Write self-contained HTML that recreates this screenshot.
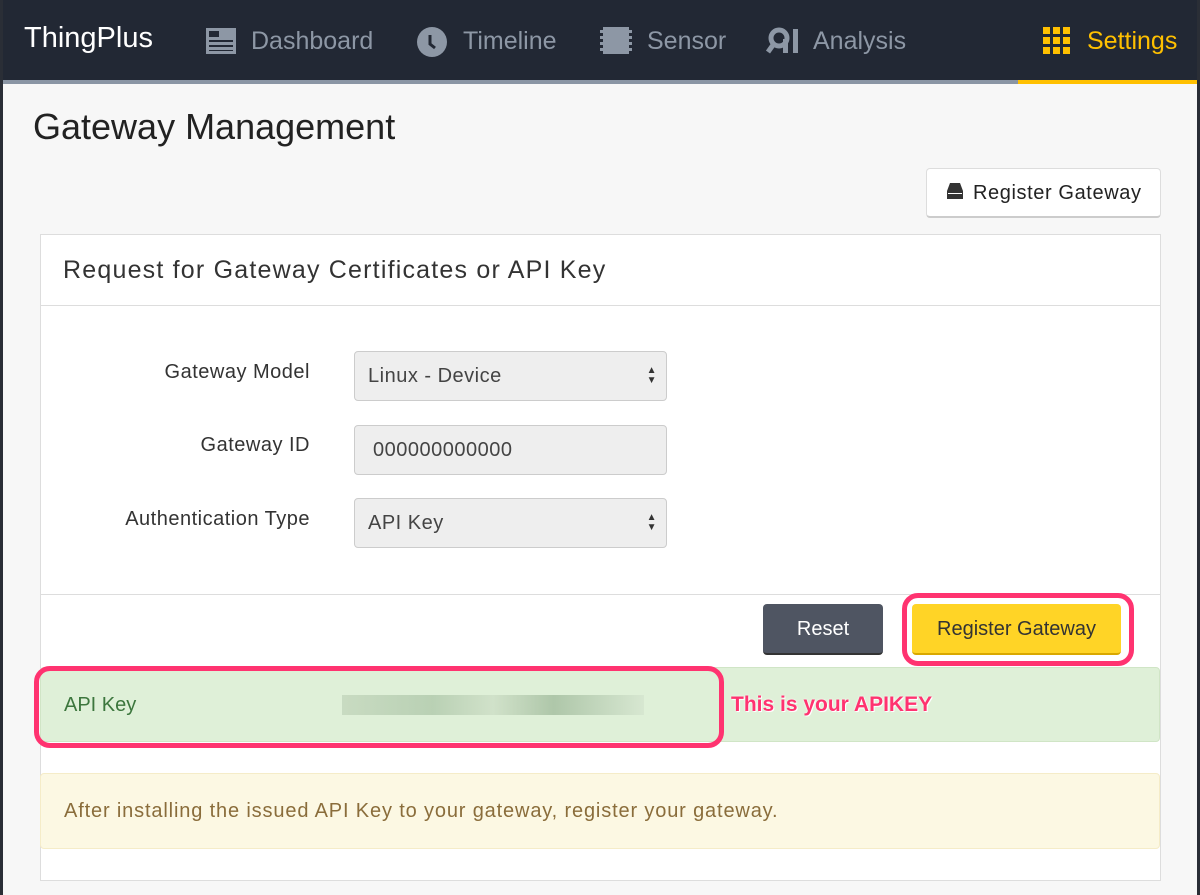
<!DOCTYPE html>
<html><head><meta charset="utf-8"><style>
*{box-sizing:border-box;margin:0;padding:0}
body{width:1200px;height:895px;background:#f7f7f7;font-family:"Liberation Sans","DejaVu Sans",sans-serif;position:relative;overflow:hidden}
.nav{position:absolute;left:0;top:0;width:1200px;height:84px;background:#222834;border-bottom:4px solid #8a95a4}
.nav .a{position:absolute;top:27px;font-size:25px;color:#8d97a5}
.sel{position:absolute;left:1018px;top:80px;width:179px;height:4px;background:#ffc000}
.abs{position:absolute}
.panel{position:absolute;left:40px;top:234px;width:1121px;height:647px;background:#fff;border:1px solid #ddd}
.lab{position:absolute;font-size:20px;letter-spacing:.5px;color:#333;text-align:right;width:270px;left:40px}
.inp{position:absolute;left:354px;width:313px;height:50px;background:#eee;border:1px solid #ccc;border-radius:4px;font-size:20px;letter-spacing:.5px;color:#444;padding:13px 0 0 13px}
.arr{position:absolute;right:9px;top:14px;font-size:10px;line-height:10px;color:#333}
</style></head><body>
<div class="nav">
<div class="a" style="left:24px;top:22px;color:#fff;font-size:29px">ThingPlus</div>
<svg class="abs" style="left:206px;top:28px" width="30" height="26"><rect x="0" y="0" width="30" height="26" fill="#8d97a5"/><rect x="3" y="3" width="10" height="6" fill="#222834"/><rect x="3" y="12" width="24" height="2" fill="#222834"/><rect x="3" y="17" width="24" height="2" fill="#222834"/><rect x="3" y="22" width="24" height="1" fill="#222834"/></svg>
<div class="a" style="left:251px">Dashboard</div>
<svg class="abs" style="left:417px;top:27px" width="30" height="30"><circle cx="15" cy="15" r="15" fill="#8d97a5"/><path d="M13 8v9l5 4" stroke="#222834" stroke-width="3" fill="none"/></svg>
<div class="a" style="left:463px">Timeline</div>
<svg class="abs" style="left:600px;top:27px" width="32" height="27"><rect x="3" y="0" width="26" height="27" fill="#8d97a5"/><g fill="#8d97a5"><rect x="0" y="3" width="32" height="3"/><rect x="0" y="9" width="32" height="3"/><rect x="0" y="15" width="32" height="3"/><rect x="0" y="21" width="32" height="3"/></g></svg>
<div class="a" style="left:647px">Sensor</div>
<svg class="abs" style="left:766px;top:27px" width="34" height="27"><circle cx="13" cy="11" r="8" stroke="#8d97a5" stroke-width="5" fill="none"/><path d="M7 18l-5 7" stroke="#8d97a5" stroke-width="5"/><rect x="17" y="12" width="5" height="14" fill="#8d97a5"/><rect x="27" y="2" width="5" height="24" fill="#8d97a5"/></svg>
<div class="a" style="left:813px">Analysis</div>
<svg class="abs" style="left:1043px;top:27px" width="28" height="27" fill="#ffc000"><rect x="0" y="0" width="7" height="7"/><rect x="10" y="0" width="7" height="7"/><rect x="20" y="0" width="7" height="7"/><rect x="0" y="10" width="7" height="7"/><rect x="10" y="10" width="7" height="7"/><rect x="20" y="10" width="7" height="7"/><rect x="0" y="20" width="7" height="7"/><rect x="10" y="20" width="7" height="7"/><rect x="20" y="20" width="7" height="7"/></svg>
<div class="a" style="left:1087px;color:#ffc000">Settings</div>
</div>
<div class="sel"></div>
<div class="abs" style="left:0;top:0;width:3px;height:895px;background:#2a2e36"></div>
<div class="abs" style="left:1197px;top:0;width:3px;height:895px;background:#2a2e36"></div>
<div class="abs" style="left:33px;top:106px;font-size:36px;color:#222">Gateway Management</div>
<div class="abs" style="left:926px;top:168px;width:235px;height:50px;background:#fff;border:1px solid #ddd;border-bottom:2px solid #ccc;border-radius:4px;font-size:20px;letter-spacing:.6px;color:#222;padding:13px 0 0 46px">Register Gateway</div>
<svg class="abs" style="left:947px;top:183px" width="16" height="16"><path d="M3 0h10l3 8v8H0V8z" fill="#333"/><rect x="1" y="10" width="14" height="1" fill="#fff"/></svg>
<div class="panel">
<div class="abs" style="left:0;top:0;width:1119px;height:71px;border-bottom:1px solid #ddd;font-size:25px;letter-spacing:1.2px;color:#333;padding:21px 0 0 22px">Request for Gateway Certificates or API Key</div>
<div class="abs" style="left:0;top:359px;width:1119px;height:1px;background:#ddd"></div>
</div>
<div class="lab" style="top:361px">Gateway Model</div>
<div class="inp" style="top:351px">Linux - Device<div class="arr">▲<br>▼</div></div>
<div class="lab" style="top:434px">Gateway ID</div>
<div class="inp" style="top:425px;padding-left:18px">000000000000</div>
<div class="lab" style="top:508px">Authentication Type</div>
<div class="inp" style="top:498px">API Key<div class="arr">▲<br>▼</div></div>
<div class="abs" style="left:763px;top:604px;width:120px;height:51px;background:#4f5562;border-radius:4px;border-bottom:2px solid #333;color:#fff;font-size:20px;text-align:center;padding-top:14px">Reset</div>
<div class="abs" style="left:912px;top:604px;width:209px;height:51px;background:#ffd426;border-radius:4px;border-bottom:2px solid #d9a800;color:#333;font-size:20px;text-align:center;padding-top:14px">Register Gateway</div>
<div class="abs" style="left:902px;top:593px;width:232px;height:73px;border:5px solid #ff3370;border-radius:16px"></div>
<div class="abs" style="left:40px;top:667px;width:1120px;height:75px;background:#dff0d8;border:1px solid #d0e5c6;border-radius:4px"></div>
<div class="abs" style="left:34px;top:666px;width:690px;height:82px;border:5px solid #ff3370;border-radius:16px"></div>
<div class="abs" style="left:64px;top:694px;font-size:20px;color:#3c763d">API Key</div>
<div class="abs" style="left:342px;top:695px;width:302px;height:20px;background:linear-gradient(90deg,#c6d9bf,#b5cdb0 30%,#cfe0c8 50%,#a9c2a4 70%,#d6e6d0);opacity:.9"></div>
<div class="abs" style="left:731px;top:693px;font-size:21px;font-weight:bold;color:#ff3370;text-shadow:0 0 2px #fff,1px 1px 0 #fff">This is your APIKEY</div>
<div class="abs" style="left:40px;top:773px;width:1120px;height:76px;background:#fcf8e3;border:1px solid #f5ecc8;border-radius:4px;font-size:20px;letter-spacing:.85px;color:#8a6d3b;padding:26px 0 0 23px">After installing the issued API Key to your gateway, register your gateway.</div>
</body></html>
